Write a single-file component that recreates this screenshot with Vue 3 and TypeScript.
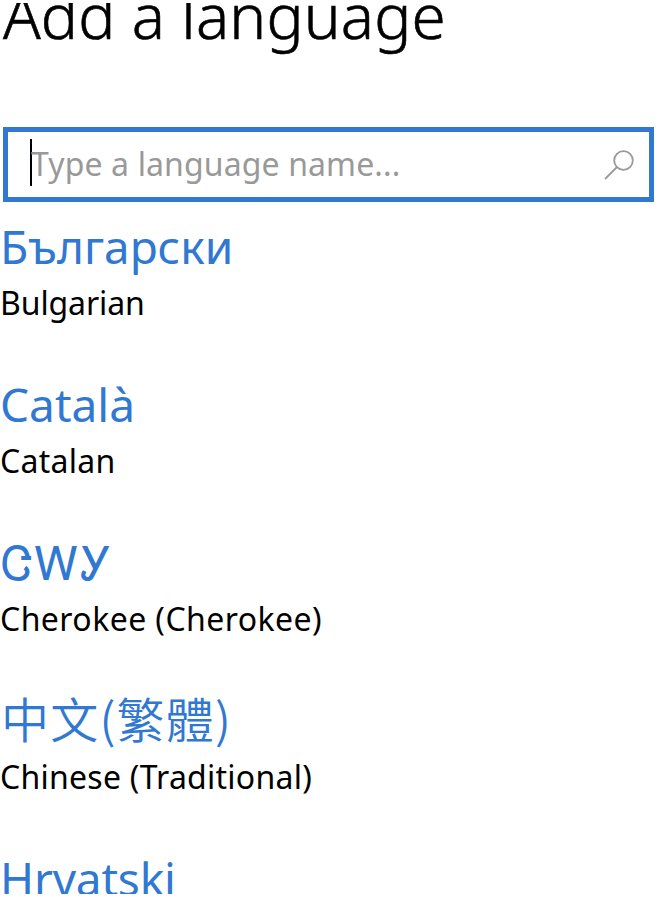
<script setup lang="ts">
interface Language {
  id: string
  native: string
  english: string
}

const languages: Language[] = [
  { id: 'bg', native: 'Български', english: 'Bulgarian' },
  { id: 'ca', native: 'Català', english: 'Catalan' },
  { id: 'chr', native: 'ᏣᎳᎩ', english: 'Cherokee (Cherokee)' },
  { id: 'zh', native: '中文(繁體)', english: 'Chinese (Traditional)' },
  { id: 'hr', native: 'Hrvatski', english: '' },
]
</script>

<template>
  <main class="page">
    <h1 class="title"><span>Add a language</span></h1>
    <div class="search">
      <span class="caret"></span>
      <span class="placeholder">Type a language name...</span>
      <svg class="icon" viewBox="0 0 30 30" fill="none" stroke="#999" stroke-width="1.8">
        <circle cx="19.5" cy="10.5" r="9.3" />
        <path d="M13 17L1 29" />
      </svg>
    </div>
    <ul class="list">
      <li v-for="l in languages" :key="l.id" class="item" :class="l.id">
        <div class="native">{{ l.native }}</div>
        <div v-if="l.english" class="english">{{ l.english }}</div>
      </li>
    </ul>
  </main>
</template>

<style>
body { background: #fff; overflow: hidden; }
</style>
<style scoped>
.page { box-sizing: border-box; width: 670px; height: 894px; padding-top: 3px; overflow: hidden; font-family: "Noto Sans", "Noto Sans CJK TC", sans-serif; color: #000; }
.title { margin: 0; height: 124px; overflow: hidden; padding-left: 3px; font-size: 62px; font-weight: 300; letter-spacing: 0.15px; -webkit-text-stroke: 0.6px #000; white-space: nowrap; }
.title span { display: block; line-height: 80px; margin-top: -28px; }
.search { box-sizing: border-box; margin-left: 3px; width: 651px; height: 75px; border: 5px solid #3078d2; display: flex; align-items: center; padding: 0 15px 0 22px; }
.caret { width: 2px; height: 47px; margin-top: -4px; background: #000; }
.placeholder { font-size: 32px; line-height: 46px; margin: -2px 0 0 -1px; letter-spacing: 0.12px; color: #999; flex: 1; white-space: nowrap; }
.icon { width: 30px; height: 30px; }
.list { margin: 0; padding: 0; list-style: none; }
.item { height: 158px; padding-top: 12px; box-sizing: border-box; }
.native { color: #3078d2; font-size: 46px; line-height: 64px; height: 64px; white-space: nowrap; }
.chr .native { letter-spacing: 1.7px; padding-left: 1px; }
.zh .native { font-size: 48px; line-height: 58px; font-weight: 350; font-family: "Noto Sans CJK TC", sans-serif; letter-spacing: 1.2px; padding-left: 1px; }
.hr .native { letter-spacing: -0.2px; }
.english { font-size: 32px; line-height: 50px; white-space: nowrap; }
.bg .english { letter-spacing: -0.1px; }
.ca .english { letter-spacing: 0.25px; }
.chr .english { letter-spacing: 0.43px; }
.zh .english { letter-spacing: 0.25px; }
</style>
